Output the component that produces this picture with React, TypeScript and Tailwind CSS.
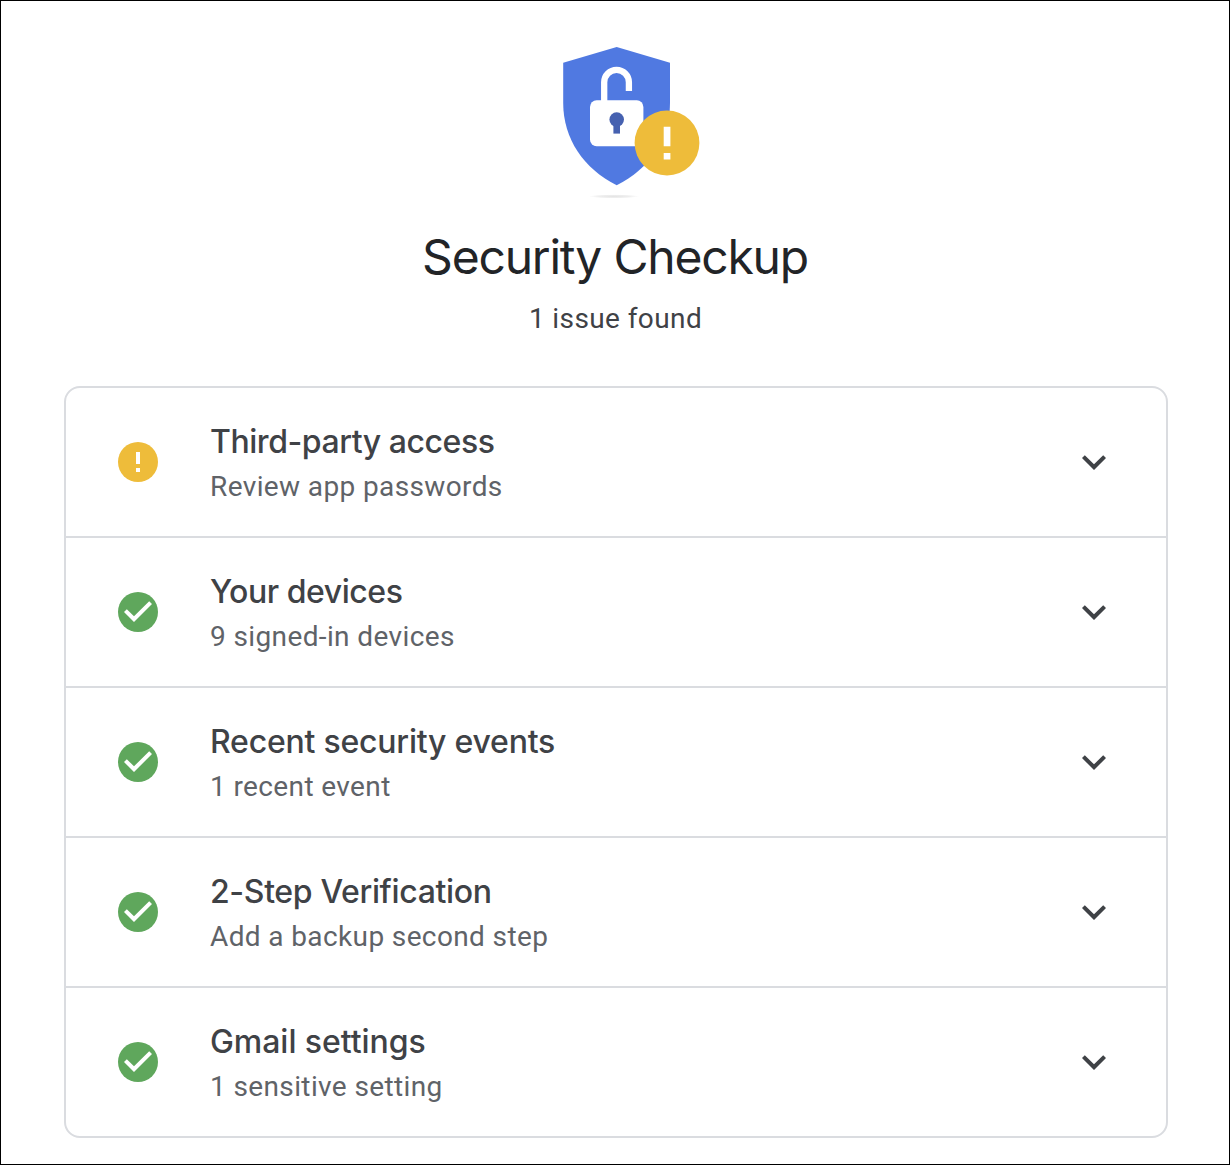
type Status = "warning" | "ok";

const items: {
  title: string;
  description: string;
  status: Status;
  titleClass: string;
}[] = [
  {
    title: "Third-party access",
    description: "Review app passwords",
    status: "warning",
    titleClass: "tracking-[-0.45px]",
  },
  {
    title: "Your devices",
    description: "9 signed-in devices",
    status: "ok",
    titleClass: "tracking-[-0.45px]",
  },
  {
    title: "Recent security events",
    description: "1 recent event",
    status: "ok",
    titleClass: "tracking-[-0.22px]",
  },
  {
    title: "2-Step Verification",
    description: "Add a backup second step",
    status: "ok",
    titleClass: "tracking-[-0.35px]",
  },
  {
    title: "Gmail settings",
    description: "1 sensitive setting",
    status: "ok",
    titleClass: "tracking-[-0.05px]",
  },
];

function ShieldIcon() {
  return (
    <svg width="170" height="154" viewBox="0 0 170 154" fill="none">
      <defs>
        <radialGradient id="shadow">
          <stop offset="0" stopColor="#e4e4e4" />
          <stop offset="0.6" stopColor="#eeeeee" />
          <stop offset="1" stopColor="#ffffff" />
        </radialGradient>
      </defs>
      <ellipse cx="84" cy="150.4" rx="25" ry="2" fill="url(#shadow)" />
      <path
        d="M86.7 1 140 16.8V57C140 93 119.4 123 86.7 139.3 54 123 33.2 93 33.2 57V16.8Z"
        fill="#5079e1"
      />
      <rect x="60" y="54.3" width="53.4" height="45.9" rx="6.6" fill="#fff" />
      <path
        d="M74.2 56V36.2a12.35 12.35 0 0 1 24.7 0V45"
        stroke="#fff"
        strokeWidth="6.3"
      />
      <circle cx="86.7" cy="73.6" r="7.3" fill="#4661b0" />
      <path d="M83.4 75h6.6v12.6h-6.6z" fill="#4661b0" />
      <circle cx="137" cy="97" r="32.4" fill="#eebc3a" />
      <path d="M133.7 80.7h6.7v19.6h-6.7zM133.7 107h6.7v6.4h-6.7z" fill="#fff" />
    </svg>
  );
}

function StatusIcon({ status }: { status: Status }) {
  if (status === "warning") {
    return (
      <svg className="size-12 shrink-0" viewBox="0 0 24 24">
        <circle cx="12" cy="12" r="10" fill="#eebc3a" />
        <path d="M11 7h2v6h-2zM11 15h2v2h-2z" fill="#fff" />
      </svg>
    );
  }

  return (
    <svg className="size-12 shrink-0" viewBox="0 0 24 24">
      <circle cx="12" cy="12" r="10" fill="#5fa75c" />
      <path
        d="M10 17l-5-5 1.41-1.41L10 14.17l7.59-7.59L19 8z"
        fill="#fff"
      />
    </svg>
  );
}

function ChevronIcon() {
  return (
    <svg className="size-12 shrink-0" viewBox="0 0 24 24">
      <path
        d="M16.59 8.59 12 13.17 7.41 8.59 6 10l6 6 6-6z"
        fill="#3f4246"
      />
    </svg>
  );
}

export default function App() {
  return (
    <main className="flex h-[1165px] w-[1230px] flex-col items-center border border-black bg-white pt-[45px] font-['Roboto',sans-serif]">
      <ShieldIcon />
      <h1 className="mt-[25px] whitespace-nowrap font-['Inter',sans-serif] text-[48px] leading-[64px] tracking-[-1.2px] text-[#222427]">
        Security Checkup
      </h1>
      <p className="mt-[10px] ml-px text-[28px] leading-[40px] tracking-[0.4px] text-[#3f4246]">
        1 issue found
      </p>

      <ul className="mt-[47px] ml-[2px] w-[1104px] divide-y-2 divide-[#dadce0] rounded-2xl border-2 border-[#dadce0]">
        {items.map((item) => (
          <li key={item.title}>
            <button
              type="button"
              className="flex h-[148px] w-full items-center px-12 text-left"
            >
              <StatusIcon status={item.status} />
              <div className="ml-12 flex-1 whitespace-nowrap">
                <h2
                  className={`font-['Inter',sans-serif] text-[32px] leading-[48px] font-medium text-[#3f4246] ${item.titleClass}`}
                >
                  {item.title}
                </h2>
                <p className="pt-px text-[28px] leading-[40px] tracking-[0.38px] text-[#5f6368]">
                  {item.description}
                </p>
              </div>
              <ChevronIcon />
            </button>
          </li>
        ))}
      </ul>
    </main>
  );
}
